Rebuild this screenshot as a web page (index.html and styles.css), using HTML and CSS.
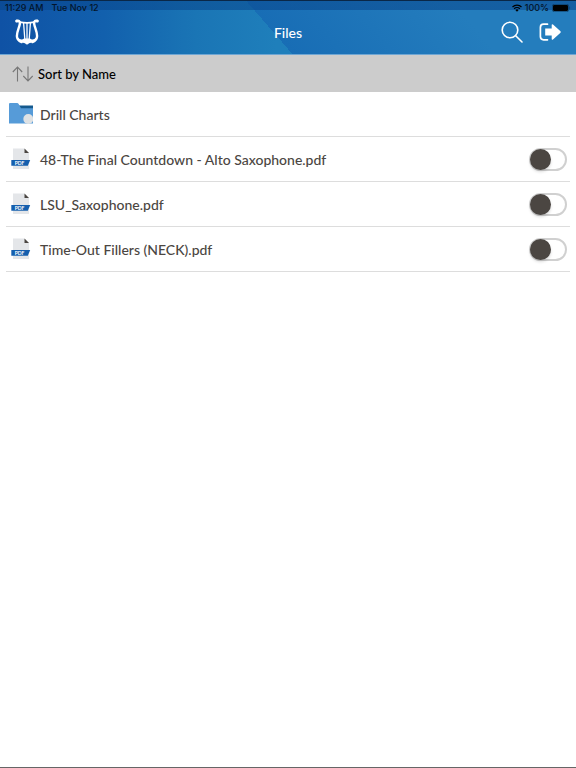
FILE: index.html
```html
<!DOCTYPE html>
<html lang="en">
<head>
  <meta charset="UTF-8">
  <meta name="viewport" content="width=device-width, initial-scale=1">
  <title>Files</title>
  <link rel="stylesheet" href="styles.css">
</head>
<body>
  <!-- HEADER -->
  <header>
    <div class="status-bar">
      <span>11:29 AM</span>
      <span>Tue Nov 12</span>
      <div class="status-right">
        <svg class="wifi" viewBox="0 0 20 15" aria-hidden="true">
          <path d="M1 5.5a13 13 0 0 1 18 0M4.3 9a8.2 8.2 0 0 1 11.4 0" fill="none" stroke="#000" stroke-width="2.6"/>
          <path d="M6.8 11.4a4.8 4.8 0 0 1 6.4 0L10 15z"/>
        </svg>
        <span>100%</span>
        <svg class="battery" viewBox="0 0 19 8" aria-hidden="true">
          <rect x="0.3" y="0.3" width="16.4" height="7.4" rx="2" fill="none" stroke="#0a3050" stroke-width="0.6"/>
          <rect x="1" y="1" width="15" height="6" rx="1.2"/>
          <path d="M17.6 2.6q1.2 1.4 0 2.8z" fill="#0a3050"/>
        </svg>
      </div>
    </div>
    <nav>
      <a href="#" class="logo" aria-label="Home">
        <svg viewBox="0 0 24 26" aria-hidden="true">
          <g fill="none" stroke="#fff" stroke-linecap="round">
            <path d="M1.8 2C5 1 5.4 4 4.3 7.2C3 11 1.9 13.5 1.9 17C1.9 20 3.5 22 6.5 23" stroke-width="2.4"/>
            <path d="M22.2 2C19 1 18.6 4 19.7 7.2C21 11 22.1 13.5 22.1 17C22.1 20 20.5 22 17.5 23" stroke-width="2.4"/>
            <path d="M4.8 3.2Q12 4.4 19.2 3.2" stroke-width="1.8"/>
            <path d="M8.6 4L9.8 20M15.4 4L14.2 20" stroke-width="1.3"/>
            <path d="M12 4V22" stroke-width="1.3"/>
          </g>
          <circle cx="1.8" cy="2" r="1.6" fill="#fff"/>
          <circle cx="22.2" cy="2" r="1.6" fill="#fff"/>
          <path d="M2.5 18Q6 22.2 9 19.6H15Q18 22.2 21.5 18Q20.8 23.5 14 24.3Q12 26.8 10 24.3Q3.2 23.5 2.5 18z" fill="#fff"/>
        </svg>
      </a>
      <h1>Files</h1>
      <div class="actions">
        <button type="button" aria-label="Search">
          <svg viewBox="0 0 22 22" fill="none" stroke="#fff" stroke-width="1.6" stroke-linecap="round" aria-hidden="true">
            <circle cx="9" cy="9" r="7.8"/>
            <path d="M14.7 14.7L21 21"/>
          </svg>
        </button>
        <button type="button" aria-label="Log out">
          <svg viewBox="0 0 22 22" aria-hidden="true">
            <path d="M8.5 3.2H4.6Q1.4 3.2 1.4 6.4V15.6Q1.4 18.8 4.6 18.8H8.5" fill="none" stroke="#fff" stroke-width="1.7" stroke-linecap="round"/>
            <path d="M6.2 7.4H12.7V3.9Q12.8 2.6 14 3.5L21.5 10.3Q22 11 21.5 11.7L14 18.5Q12.8 19.4 12.7 18.1V14.6H6.2z" fill="#fff"/>
          </svg>
        </button>
      </div>
    </nav>
  </header>

  <button type="button" class="sort-bar">
    <svg viewBox="0 0 22 16" fill="none" stroke="#777" stroke-width="1.1" aria-hidden="true">
      <path d="M5.5 15.5V1M0.8 6L5.5 1L10.2 6"/>
      <path d="M16 0.5V15M11.3 10L16 15L20.7 10"/>
    </svg>
    Sort by Name
  </button>

  <!-- FILE LIST -->
  <main>
    <ul class="file-list" id="fileList">
      <li>
        <svg class="icon" viewBox="0 0 24 24" aria-hidden="true">
          <path d="M10 3.5H24V8H10z" fill="#155a8e"/>
          <path d="M0 2Q0 1 1 1H8.2Q9 1 9.5 1.8L12 6.2H24V21.5H0z" fill="#569bd8"/>
          <circle cx="19.3" cy="17" r="5" fill="#dfe2e4"/>
        </svg>
        <a href="#">Drill Charts</a>
      </li>
    </ul>
  </main>

  <script>
    const files = [
      '48-The Final Countdown - Alto Saxophone.pdf',
      'LSU_Saxophone.pdf',
      'Time-Out Fillers (NECK).pdf',
    ];

    // Add a row with a toggle for each PDF
    const list = document.getElementById('fileList');
    files.forEach((name, index) => {
      const row = document.createElement('li');
      row.innerHTML = `
        <svg class="icon" viewBox="0 0 24 24" aria-hidden="true">
          <path d="M4 1.5H15.5L20 6V22H4z" fill="#e4e6e9"/>
          <path d="M15.5 1.5L20 6H15.5z" fill="#4b4642"/>
          <path d="M2.3 13H21.2L18.8 18.8H2.3z" fill="#155fae"/>
          <text x="10.6" y="17.8" text-anchor="middle" class="pdf-label">PDF</text>
        </svg>
        <label for="file${index}">${name}</label>
        <input type="checkbox" role="switch" class="toggle" id="file${index}">
      `;
      list.appendChild(row);
    });
  </script>
</body>
</html>
```
FILE: styles.css
```css
* {
  margin: 0;
  padding: 0;
  box-sizing: border-box;
}
body {
  display: flex;
  flex-direction: column;
  min-height: 100vh;
  font-family: Lato, sans-serif;
  font-size: 14px;
  font-weight: 500;
  color: #4b4642;
  background-color: #fff;
  border-bottom: 1px solid #666;
}
a {
  color: inherit;
  text-decoration: none;
}
button {
  font: inherit;
  border: none;
  background: none;
  cursor: pointer;
}

/* Header */
header {
  border-top: 1px solid #0a2747;
  border-bottom: 1px solid #6fa6d3;
  background:
    linear-gradient(rgba(8, 70, 140, 0.55), rgba(8, 70, 140, 0.55)) top / 100% 9px no-repeat,
    linear-gradient(49deg, transparent 47%, #186db5 47%, #247dbd 80%),
    linear-gradient(90deg, #0f52a5, #1260ad 18%, #1a75b5 34%, #1f7fbb 48%);
}
.status-bar {
  display: flex;
  align-items: center;
  gap: 8px;
  height: 13px;
  padding: 0 5px;
  font-family: Inter, sans-serif;
  font-size: 9px;
  color: #03152b;
}
.status-right {
  display: flex;
  align-items: center;
  gap: 3px;
  margin-left: auto;
}
.wifi {
  width: 10px;
  height: 8px;
}
.battery {
  width: 19px;
  height: 8px;
}
nav {
  display: grid;
  grid-template-columns: 1fr auto 1fr;
  align-items: center;
  height: 40px;
  padding: 0 15px 4px;
}
.logo svg {
  display: block;
  width: 24px;
  height: 26px;
}
h1 {
  font-size: 14px;
  font-weight: 500;
  color: #fff;
}
.actions {
  display: flex;
  justify-content: flex-end;
  gap: 16px;
}
.actions svg {
  display: block;
  width: 22px;
  height: 22px;
}

/* Sort bar */
.sort-bar {
  display: flex;
  align-items: center;
  gap: 4px;
  height: 37px;
  padding: 0 12px;
  font-size: 13px;
  color: #000;
  background-color: #ccc;
}
.sort-bar svg {
  width: 22px;
  height: 16px;
}

/* File list */
main {
  flex: 1;
}
.file-list {
  list-style: none;
  padding: 0 6px;
}
.file-list li {
  display: flex;
  align-items: center;
  gap: 7px;
  height: 45px;
  padding: 0 3px;
  border-bottom: 1px solid #ddd;
}
.file-list label,
.file-list a {
  flex: 1;
}
.icon {
  width: 24px;
  height: 24px;
}
.pdf-label {
  font-size: 5px;
  font-weight: bold;
  fill: #fff;
}
.toggle {
  appearance: none;
  width: 38px;
  height: 23px;
  border: 2px solid #d0d0d0;
  border-radius: 12px;
  cursor: pointer;
}
.toggle::before {
  content: "";
  display: block;
  width: 21px;
  height: 21px;
  margin: -1px;
  border-radius: 50%;
  background-color: #4b4642;
  box-shadow: 0 2px 3px rgba(0, 0, 0, 0.15);
}
.toggle:checked::before {
  margin-left: auto;
}
```
